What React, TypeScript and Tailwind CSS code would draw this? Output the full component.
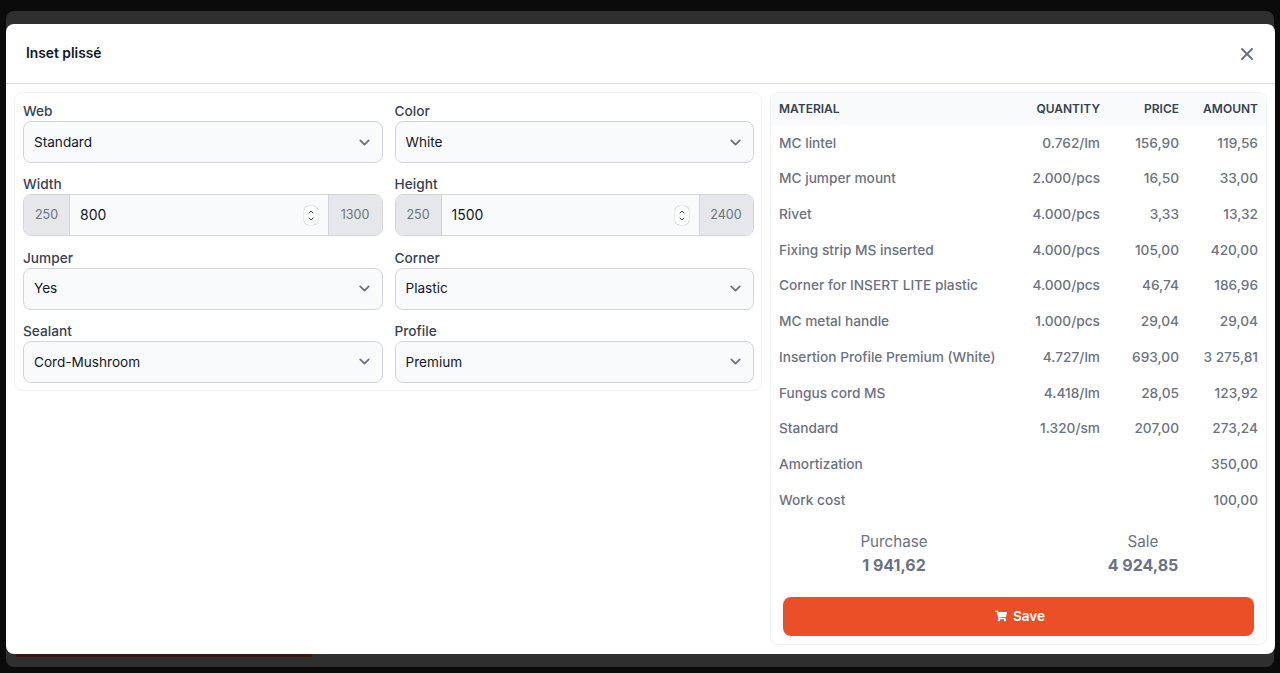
import { ChevronDown, ChevronUp, X } from 'lucide-react'
import { FaShoppingCart } from 'react-icons/fa'

const rows = [
  { name: 'MC lintel', qty: '0.762/lm', price: '156,90', amount: '119,56' },
  { name: 'MC jumper mount', qty: '2.000/pcs', price: '16,50', amount: '33,00' },
  { name: 'Rivet', qty: '4.000/pcs', price: '3,33', amount: '13,32' },
  { name: 'Fixing strip MS inserted', qty: '4.000/pcs', price: '105,00', amount: '420,00' },
  { name: 'Corner for INSERT LITE plastic', qty: '4.000/pcs', price: '46,74', amount: '186,96' },
  { name: 'MC metal handle', qty: '1.000/pcs', price: '29,04', amount: '29,04' },
  { name: 'Insertion Profile Premium (White)', qty: '4.727/lm', price: '693,00', amount: '3 275,81' },
  { name: 'Fungus cord MS', qty: '4.418/lm', price: '28,05', amount: '123,92' },
  { name: 'Standard', qty: '1.320/sm', price: '207,00', amount: '273,24' },
  { name: 'Amortization', qty: '', price: '', amount: '350,00' },
  { name: 'Work cost', qty: '', price: '', amount: '100,00' },
]

function Field({ label, children }: { label: string; children: React.ReactNode }) {
  return (
    <div>
      <div className="h-[20px] text-[13.7px] leading-[21px] font-medium text-[#374151]">{label}</div>
      {children}
    </div>
  )
}

function SelectBox({ label, value }: { label: string; value: string }) {
  return (
    <Field label={label}>
      <div className="flex h-[42px] items-center justify-between rounded-lg border border-[#d1d5db] bg-[#f9fafb] pl-[10px] pr-[8.5px] text-[13.6px] text-[#111827]">
        <span>{value}</span>
        <ChevronDown className="h-[17px] w-[17px] text-[#6b7280]" strokeWidth={2.5} />
      </div>
    </Field>
  )
}

function RangeInput({ label, min, value, max }: { label: string; min: string; value: string; max: string }) {
  return (
    <Field label={label}>
      <div className="flex h-[42px] items-stretch overflow-hidden rounded-lg border border-[#d1d5db] bg-[#f9fafb] text-sm">
        <div className="flex w-[46px] items-center justify-center border-r border-[#d1d5db] bg-[#e5e7eb] text-[12.5px] text-[#6b7280]">{min}</div>
        <div className="flex flex-1 items-center justify-between pl-[10px] pr-[10px] text-[#111827]">
          <span>{value}</span>
          <div className="flex h-[19px] w-[14px] flex-col items-center justify-center rounded-[5px] bg-white text-[#374151] shadow-[0_0_1px_#6b7280]">
            <ChevronUp className="-mb-[1px] h-[8px] w-[10px]" strokeWidth={3} />
            <ChevronDown className="h-[8px] w-[10px]" strokeWidth={3} />
          </div>
        </div>
        <div className="flex w-[54px] items-center justify-center border-l border-[#d1d5db] bg-[#e5e7eb] text-[12.5px] text-[#6b7280]">{max}</div>
      </div>
    </Field>
  )
}

export default function App() {
  return (
    <div className="h-[673px] overflow-hidden bg-[#0b0b0b] px-[6px] pt-[11px] font-['Inter',sans-serif]">
      <div className="h-[656px] rounded-lg bg-[#2f2f2f] pt-[13px]">
        <div className="flex h-[630px] w-[1269px] flex-col rounded-lg bg-white">
          <div className="flex h-[60px] shrink-0 items-center justify-between border-b border-[#d9dbde] pl-5 pr-[18px]">
            <h3 className="text-[13.8px] font-semibold text-[#111827]">Inset plissé</h3>
            <X className="h-[20px] w-[20px] text-[#6b7280]" strokeWidth={2.4} />
          </div>
          <div className="flex flex-1 items-start gap-2 px-2 pt-2">
            <div className="grid w-[748px] grid-cols-[359.5px_359px] gap-x-[12px] gap-y-[11.3px] rounded-lg border border-[#f0f1f3] pb-[7px] pl-2 pr-[7.5px] pt-[8px]">
              <SelectBox label="Web" value="Standard" />
              <SelectBox label="Color" value="White" />
              <RangeInput label="Width" min="250" value="800" max="1300" />
              <RangeInput label="Height" min="250" value="1500" max="2400" />
              <SelectBox label="Jumper" value="Yes" />
              <SelectBox label="Corner" value="Plastic" />
              <SelectBox label="Sealant" value="Cord-Mushroom" />
              <SelectBox label="Profile" value="Premium" />
            </div>
            <div className="h-[553px] w-[497px] rounded-lg border border-[#f0f1f3]">
              <table className="w-full table-fixed whitespace-nowrap text-[13.7px] font-medium text-[#6b7280]">
                <thead>
                  <tr className="h-[32px] bg-[#f9fafb] text-xs uppercase text-[#374151]">
                    <th className="pl-2 text-left font-semibold">Material</th>
                    <th className="w-[110px] text-right font-semibold">Quantity</th>
                    <th className="w-[79px] text-right font-semibold">Price</th>
                    <th className="w-[87px] pr-2 text-right font-semibold">Amount</th>
                  </tr>
                </thead>
                <tbody>
                  {rows.map((r) => (
                    <tr key={r.name} className="h-[35.72px]">
                      <td className="pl-2">{r.name}</td>
                      <td className="text-right">{r.qty}</td>
                      <td className="text-right">{r.price}</td>
                      <td className="pr-2 text-right">{r.amount}</td>
                    </tr>
                  ))}
                </tbody>
              </table>
              <div className="mt-[12px] grid grid-cols-[246px_246px] gap-x-[3px] text-center text-[#6b7280]">
                <div>
                  <div className="text-[15.2px] leading-[23px]">Purchase</div>
                  <div className="text-base leading-6 font-bold">1 941,62</div>
                </div>
                <div>
                  <div className="text-[15.2px] leading-[23px]">Sale</div>
                  <div className="text-base leading-6 font-bold">4 924,85</div>
                </div>
              </div>
              <div className="mx-3 mt-[20px] flex h-[39px] items-center justify-center gap-[6px] rounded-lg bg-[#eb4f27] pl-[3px] text-[13.6px] font-semibold text-white">
                <FaShoppingCart className="h-[12px] w-[12px]" />
                Save
              </div>
            </div>
          </div>
        </div>
        <div className="ml-[10px] h-[3px] w-[296px] bg-[#3a1410]" />
      </div>
    </div>
  )
}
